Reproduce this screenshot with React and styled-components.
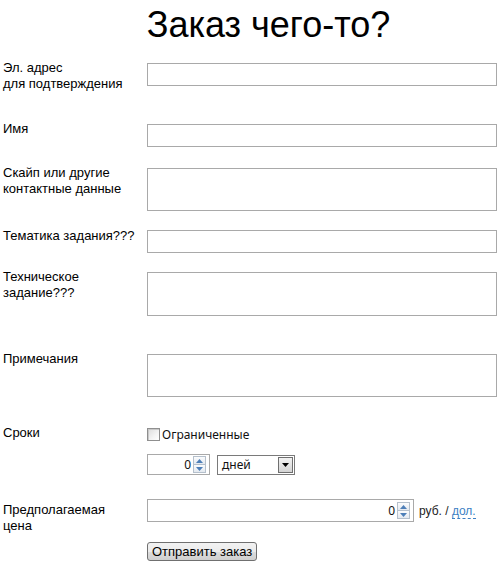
import React from "react";
import styled, { createGlobalStyle } from "styled-components";

const Global = createGlobalStyle`
  html, body { margin: 0; padding: 0; background: #fff; }
  body { font-family: "Liberation Sans", Arial, sans-serif; color: #000; }
`;

const Page = styled.div`
  width: 500px;
  padding: 0 0 0 3px;
  box-sizing: border-box;
`;

const Title = styled.h1`
  margin: 0;
  padding: 4px 0 0 34px;
  height: 60px;
  box-sizing: border-box;
  text-align: center;
  font-family: "Liberation Sans", Arial, sans-serif;
  font-weight: normal;
  font-size: 36px;
  line-height: 42px;
`;

const Row = styled.div`
  display: grid;
  grid-template-columns: 144px 350px;
  align-items: start;
  margin-bottom: ${(p) => p.$after}px;
`;

const Label = styled.label`
  font-size: 13px;
  line-height: 16px;
  padding-top: ${(p) => p.$top || 0}px;
`;

const Field = styled.div`
  padding-top: 3px;
`;

const TextInput = styled.input`
  display: block;
  width: 350px;
  height: 23px;
  box-sizing: border-box;
  border: 1px solid #a9a9a9;
  margin: 0;
  padding: 2px 4px;
  font: 13px "Liberation Sans", Arial, sans-serif;
  outline: none;
`;

const TextArea = styled.textarea`
  display: block;
  width: 350px;
  height: ${(p) => p.$h || 43}px;
  box-sizing: border-box;
  border: 1px solid #a9a9a9;
  margin: 0;
  padding: 2px 4px;
  resize: none;
  font: 13px "Liberation Sans", Arial, sans-serif;
  outline: none;
`;

const FieldStack = styled.div`
  display: flex;
  flex-direction: column;
  gap: 13px;
  padding-top: 3px;
`;

const CheckLine = styled.label`
  display: flex;
  align-items: center;
  gap: 2px;
  height: 14px;
  font-family: "Noto Sans", Tahoma, sans-serif;
  font-size: 12px;
  color: #111;
`;

const CheckBox = styled.span`
  width: 11px;
  height: 11px;
  border: 1px solid #8f8f8f;
  background: linear-gradient(135deg, #dcdcdc 0%, #f4f4f4 60%, #fff 100%);
  box-shadow: inset 1px 1px 0 #c8c8c8;
`;

const Controls = styled.div`
  display: flex;
  align-items: center;
  gap: 7px;
`;

const SpinBox = styled.div`
  display: flex;
  align-items: center;
  width: ${(p) => p.$w}px;
  height: ${(p) => p.$h || 21}px;
  box-sizing: border-box;
  border: 1px solid #a9a9a9;
  padding-right: 3px;
  background: #fff;
`;

const SpinValue = styled.span`
  flex: 1;
  text-align: right;
  font-family: "Noto Sans", Tahoma, sans-serif;
  font-size: 12px;
  padding-right: 2px;
  color: #111;
`;

const Spinner = styled.div`
  display: flex;
  flex-direction: column;
  width: 13px;
  height: 17px;
  box-sizing: border-box;
  border: 1px solid #b5c0cc;
  background: #f0f3f7;
`;

const SpinHalf = styled.div`
  flex: 1;
  display: flex;
  align-items: center;
  justify-content: center;
  border-top: ${(p) => (p.$down ? "1px solid #b5c0cc" : "none")};
  background: linear-gradient(#fbfcfd, #e3e9f0);
`;

const Arrow = ({ down }) => (
  <svg width="7" height="4" viewBox="0 0 7 4">
    {down ? (
      <path d="M0 0h7L3.5 4z" fill="#4d7fb8" />
    ) : (
      <path d="M0 4h7L3.5 0z" fill="#4d7fb8" />
    )}
  </svg>
);

const Spin = () => (
  <Spinner>
    <SpinHalf>
      <Arrow />
    </SpinHalf>
    <SpinHalf $down>
      <Arrow down />
    </SpinHalf>
  </Spinner>
);

const Select = styled.div`
  display: flex;
  align-items: center;
  width: 78px;
  height: 20px;
  box-sizing: border-box;
  border: 1px solid #7a7a7a;
  padding: 0 1px 0 4px;
  font-family: "Noto Sans", Tahoma, sans-serif;
  font-size: 12px;
  color: #111;
`;

const SelectText = styled.span`
  flex: 1;
`;

const SelectBtn = styled.span`
  width: 15px;
  height: 16px;
  box-sizing: border-box;
  border: 1px solid #6f6f6f;
  background: linear-gradient(#f2f2f2, #d4d4d4);
  display: flex;
  align-items: center;
  justify-content: center;
`;

const PriceLine = styled.div`
  display: flex;
  align-items: center;
  gap: 5px;
  padding-top: 3px;
`;

const Currency = styled.span`
  font-family: "Liberation Sans", Arial, sans-serif;
  font-size: 12px;
  color: #222;
`;

const CurLink = styled.a`
  color: #3b7fc4;
  text-decoration: none;
  border-bottom: 1px dashed #3b7fc4;
  cursor: pointer;
`;

const Submit = styled.button`
  height: 19px;
  padding: 0 4px;
  border: 1px solid #707070;
  border-radius: 3px;
  background: linear-gradient(#f2f2f2 0%, #ebebeb 50%, #dddddd 51%, #cfcfcf 100%);
  font: 13px "Liberation Sans", Arial, sans-serif;
  color: #000;
  line-height: 15px;
`;

export default function App() {
  return (
    <Page>
      <Global />
      <Title>Заказ чего-то?</Title>

      <Row $after={29}>
        <Label>
          Эл. адрес
          <br />
          для подтверждения
        </Label>
        <Field>
          <TextInput />
        </Field>
      </Row>

      <Row $after={18}>
        <Label>Имя</Label>
        <Field>
          <TextInput />
        </Field>
      </Row>

      <Row $after={16}>
        <Label>
          Скайп или другие
          <br />
          контактные данные
        </Label>
        <Field>
          <TextArea />
        </Field>
      </Row>

      <Row $after={16}>
        <Label $top={1}>Тематика задания???</Label>
        <Field>
          <TextInput />
        </Field>
      </Row>

      <Row $after={35}>
        <Label>
          Техническое
          <br />
          задание???
        </Label>
        <Field>
          <TextArea $h={44} />
        </Field>
      </Row>

      <Row $after={27}>
        <Label>Примечания</Label>
        <Field>
          <TextArea />
        </Field>
      </Row>

      <Row $after={21}>
        <Label $top={1}>Сроки</Label>
        <FieldStack>
          <CheckLine>
            <CheckBox />
            Ограниченные
          </CheckLine>
          <Controls>
            <SpinBox $w={63}>
              <SpinValue>0</SpinValue>
              <Spin />
            </SpinBox>
            <Select>
              <SelectText>дней</SelectText>
              <SelectBtn>
                <svg width="7" height="4" viewBox="0 0 7 4">
                  <path d="M0 0h7L3.5 4z" fill="#000" />
                </svg>
              </SelectBtn>
            </Select>
          </Controls>
        </FieldStack>
      </Row>

      <Row $after={5}>
        <Label $top={6}>
          Предполагаемая
          <br />
          цена
        </Label>
        <PriceLine>
          <SpinBox $w={267} $h={23}>
            <SpinValue>0</SpinValue>
            <Spin />
          </SpinBox>
          <Currency>
            руб. / <CurLink>дол.</CurLink>
          </Currency>
        </PriceLine>
      </Row>

      <Row $after={0}>
        <span />
        <Field>
          <Submit type="button">Отправить заказ</Submit>
        </Field>
      </Row>
    </Page>
  );
}
